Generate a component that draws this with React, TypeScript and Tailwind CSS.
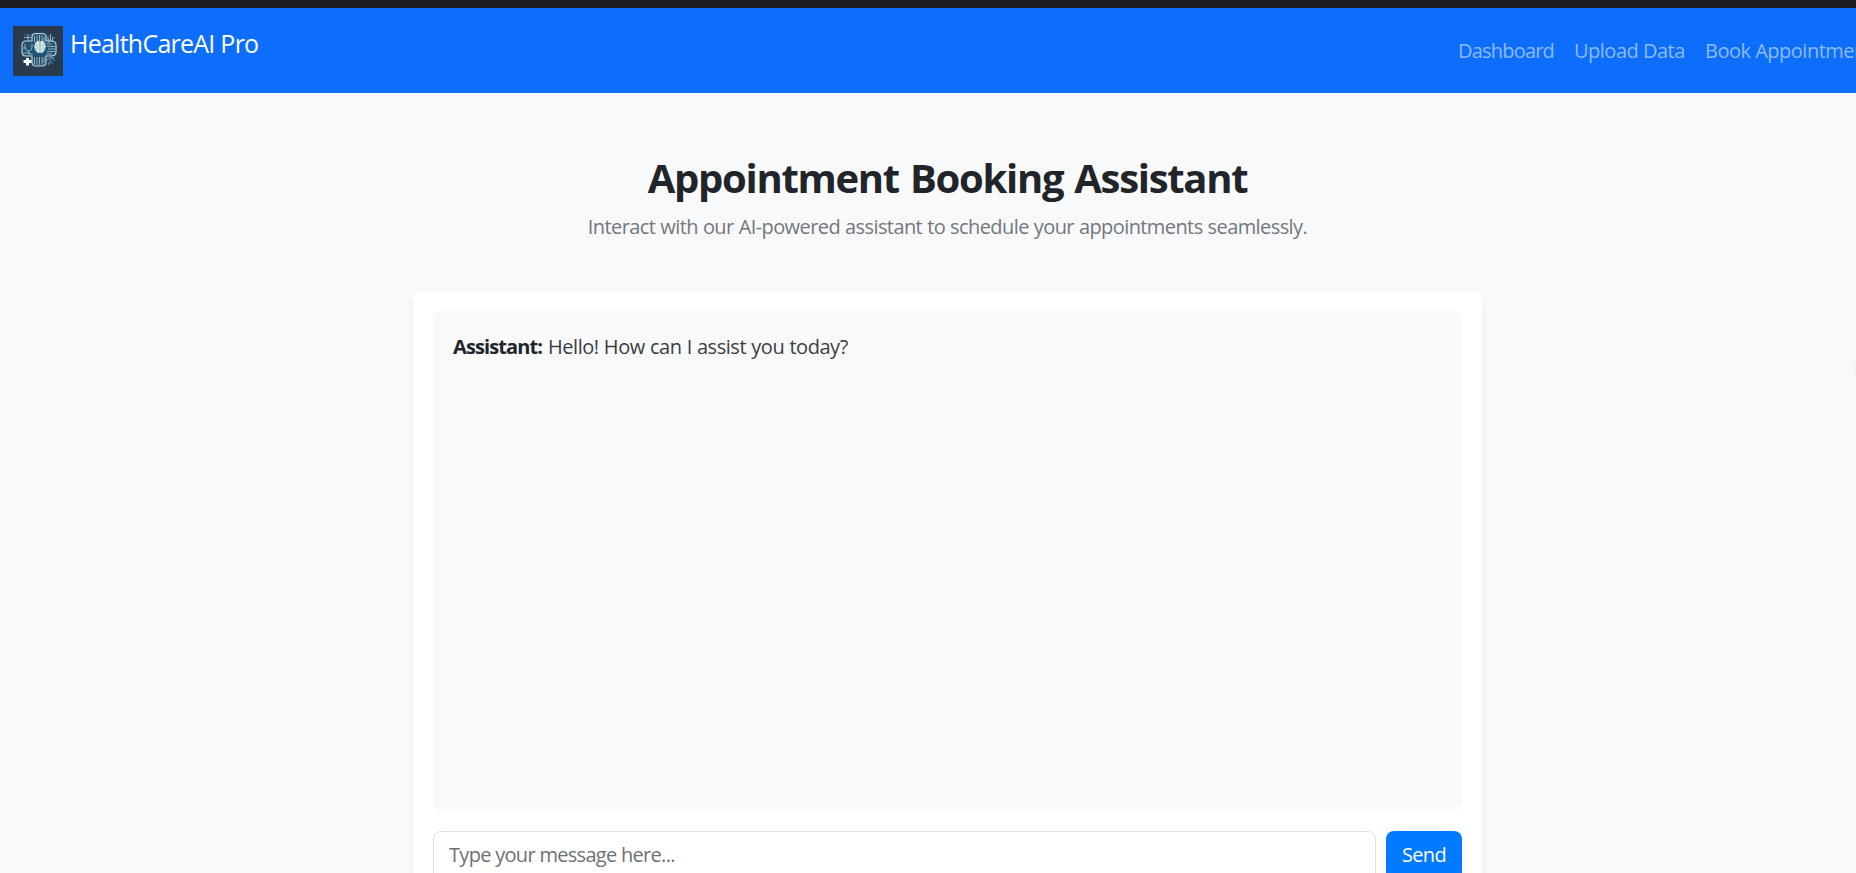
import { useState } from "react";

const links = [
  { label: "Dashboard", width: "w-[96px]", tracking: "tracking-[-0.8px]" },
  { label: "Upload Data", width: "w-[111px]", tracking: "tracking-[-0.5px]" },
  { label: "Book Appointment", width: "w-[180px]", tracking: "tracking-[-0.5px]" },
];

function Logo() {
  return (
    <svg width="50" height="50" viewBox="0 0 50 50" className="shrink-0">
      <defs>
        <radialGradient id="glow">
          <stop offset="0" stopColor="#16658f" />
          <stop offset="0.5" stopColor="#214866" />
          <stop offset="1" stopColor="#2a3a4d" />
        </radialGradient>
      </defs>
      <rect width="50" height="50" fill="#2a3a4d" />
      <circle cx="26" cy="24" r="22" fill="url(#glow)" />

      {/* cross outline */}
      <path
        d="M19 15v-4q0-3.500 4-3.500h6q4 0 4 3.500v4h5q5 0 5 4v7q0 4-5 4h-5v6q0 4-4 4h-6q-4 0-4-4v-6h-6q-4 0-4-4v-7q0-4 4-4z"
        fill="#24506d"
        stroke="#c3d6da"
        strokeWidth="1.100"
      />

      {/* circuit tracks */}
      <g fill="none" stroke="#adc8d0" strokeWidth="0.8">
        <path d="M21.500 10v6M24 9v6M26.500 9v6M29 9v6M31 11v5M21.500 31v7M24 31v8M26.500 31v8M29 31v8M31 31v6" />
        <path d="M33 18h6M34 20.500h8M35 23h7M34 25.500h8M33 28h6M36 17v-4M10 22h3M10 27h7" />
        <path d="M12 18v3q0 4 3.500 4T19 21v-3M15.500 25v3h4" />
        <path d="M15 8v7M11 11.500h7M35 10v5M37.500 8v7M39.500 11v4M34 34l3-2h4M35 39l3-5" />
      </g>
      <g fill="#2688b8">
        <circle cx="12" cy="9" r="0.8" />
        <circle cx="18" cy="9" r="0.8" />
        <circle cx="41" cy="12" r="0.9" />
        <circle cx="34" cy="16" r="0.9" />
        <circle cx="39" cy="37" r="0.9" />
        <circle cx="41" cy="34" r="0.9" />
        <circle cx="18" cy="24" r="1.200" />
      </g>

      {/* brain */}
      <circle cx="27" cy="22" r="7" fill="#185c82" />
      <path
        d="M26.800 15.500q-2-1.500-3.500.5-2 .5-1.500 2.500-1.500 2 0 3.500-.5 2.500 1.500 3.200 1 2.500 3.500 1.500zM27.200 15.500q2-1.500 3.500.5 2 .5 1.500 2.500 1.500 2 0 3.500.5 2.500-1.500 3.200-1 2.500-3.500 1.500z"
        fill="#d5e5e7"
      />
      <path d="M22.500 18.500l2 1.500M22.500 23.500l2-1.500M31.500 18.500l-2 1.500M31.500 23.500l-2-1.500" stroke="#5b91a8" strokeWidth="0.6" />

      <path d="M13 32h3v2h2.500v3H16v2.500h-3V37h-2.500v-3H13z" fill="#f4fafa" />
    </svg>
  );
}

export default function App() {
  const [message, setMessage] = useState("");

  return (
    <div className="relative h-[873px] w-full overflow-hidden bg-[#f8f9fb] font-['Open_Sans',sans-serif] text-[20px] leading-[30px] text-[#212529]">
      <div className="w-[1895px]">
        <div className="h-2 bg-[#1c1c21]" />

        <nav className="flex h-[85px] items-center justify-between bg-[#0d6efd] pl-[13px] pr-[10px]">
          <a href="#" className="flex h-[50px] gap-[7px] text-white">
            <Logo />
            <span className="mt-px whitespace-nowrap text-[25px] leading-8 tracking-[-0.75px]">HealthCareAI Pro</span>
          </a>
          <div className="flex gap-5 pt-px text-[#8cbbfe]">
            {links.map((l) => (
              <a key={l.label} href="#" className={`whitespace-nowrap ${l.width} ${l.tracking}`}>
                {l.label}
              </a>
            ))}
          </div>
        </nav>

        <header className="pt-[61px] text-center">
          <h1 className="text-[40px] font-bold leading-[48px] tracking-[-1.3px] [word-spacing:2px]">Appointment Booking Assistant</h1>
          <p className="mt-[10px] tracking-[-0.59px] text-[#73777c] [word-spacing:0.4px]">
            Interact with our AI-powered assistant to schedule your appointments seamlessly.
          </p>
        </header>

        <main className="mx-auto mt-[49px] w-[1069px] rounded-lg bg-white p-5 shadow-[0_4px_10px_rgba(0,0,0,0.05)]">
          <div className="h-[500px] rounded-lg bg-[#f8f9fb] p-5">
            <p className="mt-px flex whitespace-nowrap">
              <strong className="w-[95px] tracking-[-0.9px]">Assistant:</strong>
              <span className="tracking-[-0.45px] text-[#3a3d41] [word-spacing:0.4px]">Hello! How can I assist you today?</span>
            </p>
          </div>
          <form className="mt-5 flex gap-[10px]" onSubmit={(e) => e.preventDefault()}>
            <input
              className="h-[50px] flex-1 rounded-lg border border-[#dee2e6] px-[15px] pb-[3px] tracking-[-0.7px] placeholder:text-[#6c7176] placeholder:opacity-100"
              placeholder="Type your message here..."
              value={message}
              onChange={(e) => setMessage(e.target.value)}
            />
            <button className="h-[50px] w-[76px] rounded-lg bg-[#007bff] pb-[2px] tracking-[-0.7px] text-white">Send</button>
          </form>
        </main>
      </div>

      {/* floating handle just past the right edge */}
      <div className="absolute left-[1858px] top-[353px] h-9 w-9 rounded-full shadow-[0_0_6px_rgba(0,0,0,0.15)]" />
    </div>
  );
}
